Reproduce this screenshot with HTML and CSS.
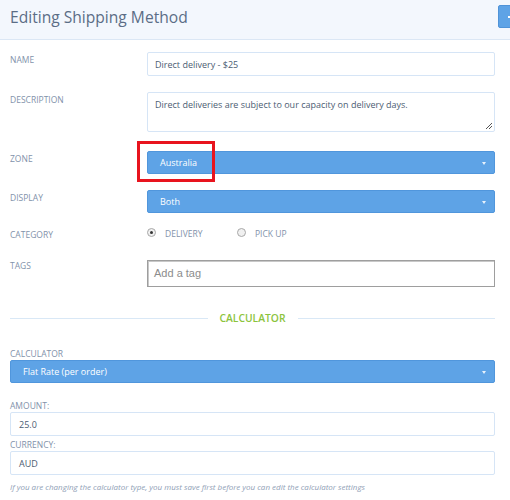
FILE: index.html
```html
<!DOCTYPE html>
<html>
<head>
<meta charset="utf-8">
<link rel="stylesheet" href="styles.css">
</head>
<body>
<header class="page-head">
  <h1 class="title">Editing Shipping Method</h1>
  <span class="head-btn" aria-label="Add"></span>
</header>
<main class="content">
  <div class="row row-name">
    <label class="lbl">Name</label>
    <div class="input">Direct delivery - $25</div>
  </div>
  <div class="row row-desc">
    <label class="lbl">Description</label>
    <div class="input textarea">Direct deliveries are subject to our capacity on delivery days.
      <svg class="grip" width="8" height="8" viewBox="0 0 8 8"><path d="M7 1 L1 7 M7 4 L4 7" stroke="#555" stroke-width="1"/></svg>
    </div>
  </div>
  <div class="row row-zone">
    <label class="lbl">Zone</label>
    <div class="select">Australia<span class="caret"></span><span class="highlight"></span></div>
  </div>
  <div class="row row-display">
    <label class="lbl">Display</label>
    <div class="select">Both<span class="caret"></span></div>
  </div>
  <div class="row row-cat">
    <label class="lbl">Category</label>
    <div class="radios">
      <span class="radio-item"><span class="radio checked"></span>Delivery</span>
      <span class="radio-item"><span class="radio"></span>Pick up</span>
    </div>
  </div>
  <div class="row row-tags">
    <label class="lbl">Tags</label>
    <div class="tags">Add a tag</div>
  </div>
  <div class="divider"><span>Calculator</span></div>
  <div class="block block-calc">
    <label class="lbl-top">Calculator</label>
    <div class="select wide">Flat Rate (per order)<span class="caret"></span></div>
  </div>
  <div class="block block-amount">
    <label class="lbl-top">Amount:</label>
    <div class="input small">25.0</div>
  </div>
  <div class="block block-currency">
    <label class="lbl-top">Currency:</label>
    <div class="input small">AUD</div>
  </div>
  <p class="note">If you are changing the calculator type, you must save first before you can edit the calculator settings</p>
</main>
</body>
</html>
```

FILE: styles.css
```css
html, body {
  margin: 0;
  padding: 0;
  background: #ffffff;
  overflow: hidden;
  font-family: "Open Sans", "DejaVu Sans", sans-serif;
}
.page-head {
  display: flex;
  align-items: flex-start;
  height: 39px;
  background: #f3f7fd;
  border-bottom: 1px solid #dbe7f5;
  padding-left: 10px;
  box-sizing: content-box;
}
.title {
  margin: 4px 0 0;
  font-size: 15.6px;
  font-weight: 400;
  color: #5b6d86;
  line-height: 26px;
}
.head-btn {
  position: relative;
  margin-left: auto;
  margin-top: 5px;
  margin-right: -30px;
  width: 42px;
  height: 23px;
  background: #5ea3e6;
  border: 1px solid #4f93d8;
  border-radius: 2px;
  box-sizing: border-box;
}
.head-btn::before {
  content: "";
  position: absolute;
  left: 9px;
  top: 10px;
  width: 6px;
  height: 2px;
  background: #fff;
}
.content {
  padding: 12px 15px 0 10px;
}
.row {
  display: grid;
  grid-template-columns: 137px 1fr;
  align-items: start;
}
.lbl, .lbl-top {
  display: block;
  font-size: 8.5px;
  text-transform: uppercase;
  color: #8292aa;
  letter-spacing: 0;
  line-height: 12px;
  padding-top: 2px;
}
.input {
  height: 24px;
  box-sizing: border-box;
  border: 1px solid #d6e5f6;
  border-radius: 2px;
  background: #fff;
  font-size: 9px;
  color: #4c5d72;
  padding: 5px 7px;
  line-height: 13px;
}
.textarea {
  height: 40px;
  position: relative;
}
.grip {
  position: absolute;
  right: 1px;
  bottom: 1px;
}
.row-desc { margin-top: 16px; }
.row-zone { margin-top: 19px; }
.row-display { margin-top: 16px; }
.row-cat { margin-top: 14px; }
.row-tags { margin-top: 19px; }
.select {
  position: relative;
  height: 23px;
  box-sizing: border-box;
  background: #5ea3e6;
  border: 1px solid #5096dc;
  border-radius: 2px;
  color: #fff;
  font-size: 9px;
  line-height: 13px;
  padding: 4px 12px;
}
.caret {
  position: absolute;
  right: 8px;
  top: 10px;
  width: 0;
  height: 0;
  border-left: 2.5px solid transparent;
  border-right: 2.5px solid transparent;
  border-top: 3px solid #e8f1fb;
}
.highlight {
  position: absolute;
  left: -11px;
  top: -11px;
  width: 78px;
  height: 41px;
  box-sizing: border-box;
  border: 3px solid #e8141e;
}
.radios {
  display: flex;
  padding-top: 1px;
}
.radio-item {
  display: flex;
  align-items: center;
  font-size: 8.5px;
  text-transform: uppercase;
  color: #8292aa;
  line-height: 12px;
  width: 90px;
}
.radio {
  width: 7px;
  height: 7px;
  border-radius: 50%;
  border: 1px solid #a8a8a8;
  background: #f0f0f0;
  margin-right: 9px;
  margin-top: -3px;
  position: relative;
}
.radio.checked::after {
  content: "";
  position: absolute;
  left: 2px;
  top: 2px;
  width: 3px;
  height: 3px;
  border-radius: 50%;
  background: #333;
}
.tags {
  height: 27px;
  box-sizing: border-box;
  border: 1px solid #9e9e9e;
  box-shadow: inset 1px 1px 0 #c8c8c8;
  font-family: "Liberation Sans", Arial, sans-serif;
  font-size: 11px;
  color: #8c8c8c;
  padding: 6px 6px;
  line-height: 13px;
}
.row-tags .lbl { padding-top: 0; }
.divider {
  display: flex;
  align-items: center;
  gap: 12px;
  margin-top: 24px;
}
.divider::before, .divider::after {
  content: "";
  flex: 1;
  height: 1px;
  background: #d9e8f6;
}
.divider span {
  font-size: 10.3px;
  text-transform: uppercase;
  color: #8cc43d;
  font-weight: 600;
  line-height: 14px;
}
.block .lbl-top {
  padding-top: 0;
  line-height: 11px;
  margin-bottom: 1px;
}
.block-calc { margin-top: 23px; }
.block-amount { margin-top: 17px; }
.block-currency { margin-top: 3px; }
.input.small {
  height: 24px;
  padding-left: 8px;
}
.note {
  margin: 6px 0 0;
  font-size: 8px;
  font-style: italic;
  color: #8fa0b6;
  line-height: 12px;
}
```
